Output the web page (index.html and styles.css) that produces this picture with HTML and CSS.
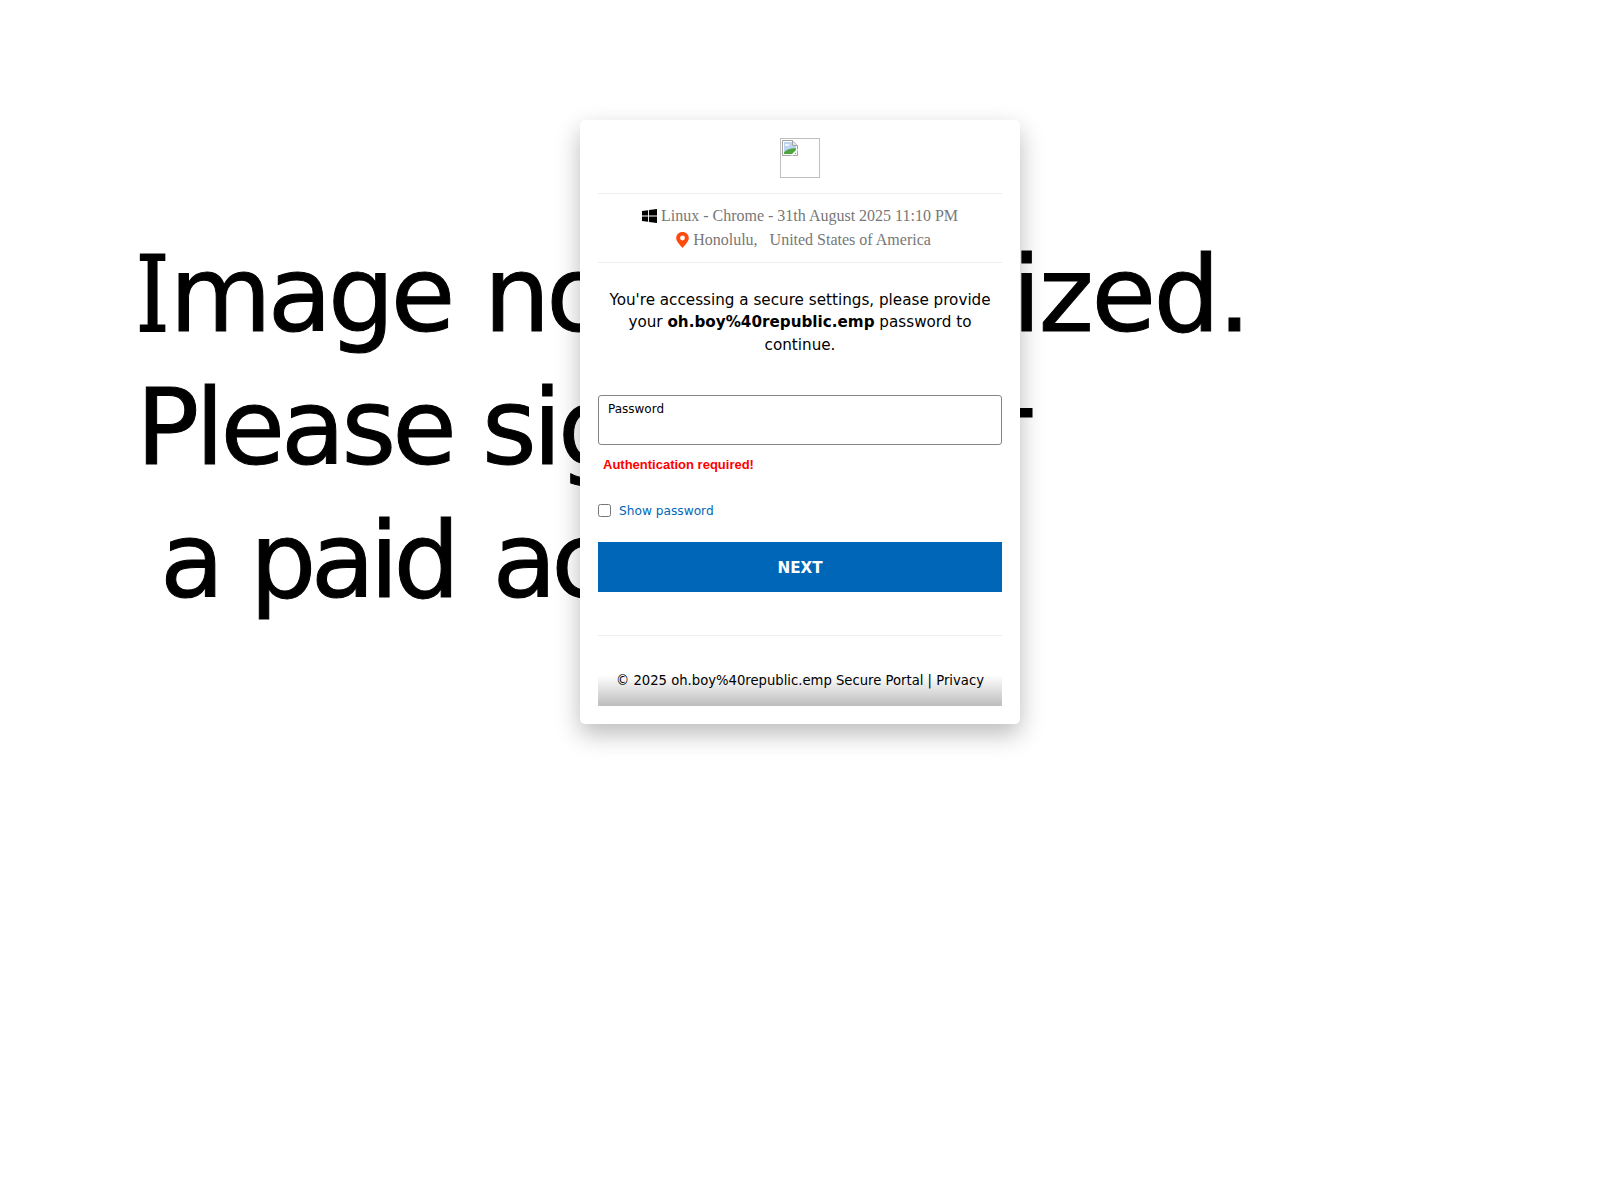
FILE: index.html
```html
<!DOCTYPE html>
<html lang="en">
<head>
<meta charset="utf-8">
<title>Secure Portal</title>
<link rel="stylesheet" href="styles.css">
</head>
<body>
<div class="stage">
  <div class="backdrop">
    <div class="backdrop-line backdrop-line-first"><span class="serif-i">I</span>mage not <span class="gap-word">authorized.</span></div>
    <div class="backdrop-line">Please sign up <span class="raised-dash">-</span></div>
    <div class="backdrop-line backdrop-line-last">a paid <span class="gap-account">account</span></div>
  </div>
  <main class="card">
    <div class="logo-row">
      <div class="broken-image">
        <svg class="broken-icon" width="16" height="16" viewBox="0 0 16 16">
          <path d="M0.5 0.5H10.5L15.5 5.5V15.5H0.5Z" fill="#fff" stroke="#a3a3a3"/>
          <path d="M2 2H10V6H14V14H2Z" fill="#bcd3f2"/>
          <path d="M3 5C3 3.8 5 3.6 5.6 4.4C6.8 4.2 7.6 5 7.4 5.8H3.4Z" fill="#fff"/>
          <path d="M2 14V12.4C5 9.6 9 8 14 8.4V14Z" fill="#4ea63a"/>
          <path d="M8.5 15.5L15.5 8.5V11L11 15.5Z" fill="#fff"/>
          <path d="M10.5 0.5V5.5H15.5" fill="#e4e4e4" stroke="#a3a3a3"/>
        </svg>
      </div>
    </div>
    <div class="meta">
      <div class="meta-line">
        <svg class="icon-win" width="15" height="14" viewBox="0 0 15 14"><path d="M0 2.1L6.1 1.2V6.6H0ZM7 1.1L15 0V6.6H7ZM0 7.4H6.1V12.8L0 11.9ZM7 7.4H15V14L7 12.9Z"/></svg>
        <span>Linux - Chrome - 31th August 2025 11:10 PM</span>
      </div>
      <div class="meta-line meta-line-place">
        <svg class="icon-pin" width="13" height="16" viewBox="0 0 13 16"><path fill-rule="evenodd" d="M6.5 0C2.9 0 0.2 2.7 0.2 6C0.2 9.8 4.7 13.6 6.5 16C8.3 13.6 12.8 9.8 12.8 6C12.8 2.7 10.1 0 6.5 0ZM6.5 3.6A2.4 2.4 0 1 1 6.5 8.4A2.4 2.4 0 1 1 6.5 3.6Z"/></svg>
        <span>Honolulu, &nbsp; United States of America</span>
      </div>
    </div>
    <p class="message">You're accessing a secure settings, please provide your <b>oh.boy%40republic.emp</b> password to continue.</p>
    <div class="field"><label class="field-label" for="pw">Password</label><input class="field-input" id="pw" type="password"></div>
    <div class="error">Authentication required!</div>
    <label class="show"><input class="show-box" type="checkbox"><span class="show-text">Show password</span></label>
    <button class="next" type="button">NEXT</button>
    <footer class="footer">© 2025 oh.boy%40republic.emp Secure Portal | Privacy</footer>
  </main>
</div>
</body>
</html>
```
FILE: styles.css
```css
html, body { margin: 0; padding: 0; background: #fff; }
body { width: 1600px; height: 1200px; overflow: hidden; }
.stage { display: grid; width: 1600px; height: 1200px; }
.backdrop {
  grid-area: 1 / 1;
  padding: 229px 0 0 136px;
  font-family: "DejaVu Sans", sans-serif;
  font-size: 105px;
  line-height: 133px;
  letter-spacing: -4px;
  -webkit-text-stroke: 1px #000;
  color: #000;
}
.backdrop-line { white-space: nowrap; }
.backdrop-line-first { word-spacing: 3px; }
.serif-i { display: inline-block; font-family: "DejaVu Serif", serif; letter-spacing: -8px; -webkit-text-stroke: 2px #000; transform: scaleX(0.8); transform-origin: left center; }
.gap-word { margin-left: 5px; letter-spacing: -2.5px; }
.raised-dash { margin-left: 132px; line-height: 0; vertical-align: 22px; }
.backdrop-line-last { padding-left: 24px; letter-spacing: -5.5px; word-spacing: 3px; }
.gap-account { margin-left: 7px; }
.card {
  grid-area: 1 / 1;
  justify-self: start;
  align-self: start;
  margin: 120px 0 0 580px;
  width: 440px;
  height: 604px;
  box-sizing: border-box;
  padding: 18px;
  background: #fff;
  border-radius: 5px;
  box-shadow: 0 10px 25px rgba(0, 0, 0, 0.27);
  display: flex;
  flex-direction: column;
  font-family: "DejaVu Sans", sans-serif;
  color: #000;
}
.logo-row { display: flex; justify-content: center; height: 55px; flex: none; border-bottom: 1px solid #eee; }
.broken-image { width: 40px; height: 40px; box-sizing: border-box; border: 1px solid #c0c0c0; padding: 1px; }
.broken-icon { display: block; }
.meta {
  padding: 10px 0 7px;
  height: 69px;
  flex: none;
  box-sizing: border-box;
  border-bottom: 1px solid #eee;
  font-family: "Liberation Serif", serif;
  font-size: 16px;
  line-height: 24px;
  color: #777;
  text-align: center;
}
.meta-line { display: flex; justify-content: center; align-items: center; gap: 4px; white-space: pre; }
.meta-line-place { padding-left: 7px; }
.icon-win { fill: #000; margin-top: -1px; }
.icon-pin { fill: #ff4a0d; margin-top: -1px; }
.message { margin: 25.5px 0 0; font-size: 15.2px; line-height: 22.8px; text-align: center; height: 106.5px; flex: none; }
.field { display: grid; height: 50px; flex: none; }
.field-label { grid-area: 1 / 1; z-index: 1; padding: 7px 0 0 10px; font-size: 12px; line-height: 15px; pointer-events: none; }
.field-input { grid-area: 1 / 1; box-sizing: border-box; width: 100%; height: 50px; border: 1px solid #858585; border-radius: 3px; background: #fff; outline: none; }
.error { margin: 12px 0 0 5px; height: 31px; flex: none; font-family: "Liberation Sans", sans-serif; font-weight: bold; font-size: 13px; line-height: 15px; color: #f00; }
.show { display: flex; align-items: center; gap: 8px; height: 16px; flex: none; margin-top: 14px; font-size: 12.2px; line-height: 16px; color: #0067b8; }
.show-box { margin: 0; width: 13px; height: 13px; }
.show-text { padding-top: 2px; }
.next {
  margin-top: 24px;
  height: 50px;
  flex: none;
  border: 0;
  padding: 2px 0 0;
  background: #0067b8;
  color: #fff;
  font-family: "DejaVu Sans", sans-serif;
  font-weight: bold;
  font-size: 15.2px;
}
.footer {
  margin-top: auto;
  border-top: 1px solid #eee;
  height: 71px;
  flex: none;
  box-sizing: border-box;
  padding-top: 36px;
  text-align: center;
  font-size: 13.2px;
  line-height: 18px;
  background: linear-gradient(to bottom, #fff 0, #fff 56%, #bdbdbd 100%);
}
```
